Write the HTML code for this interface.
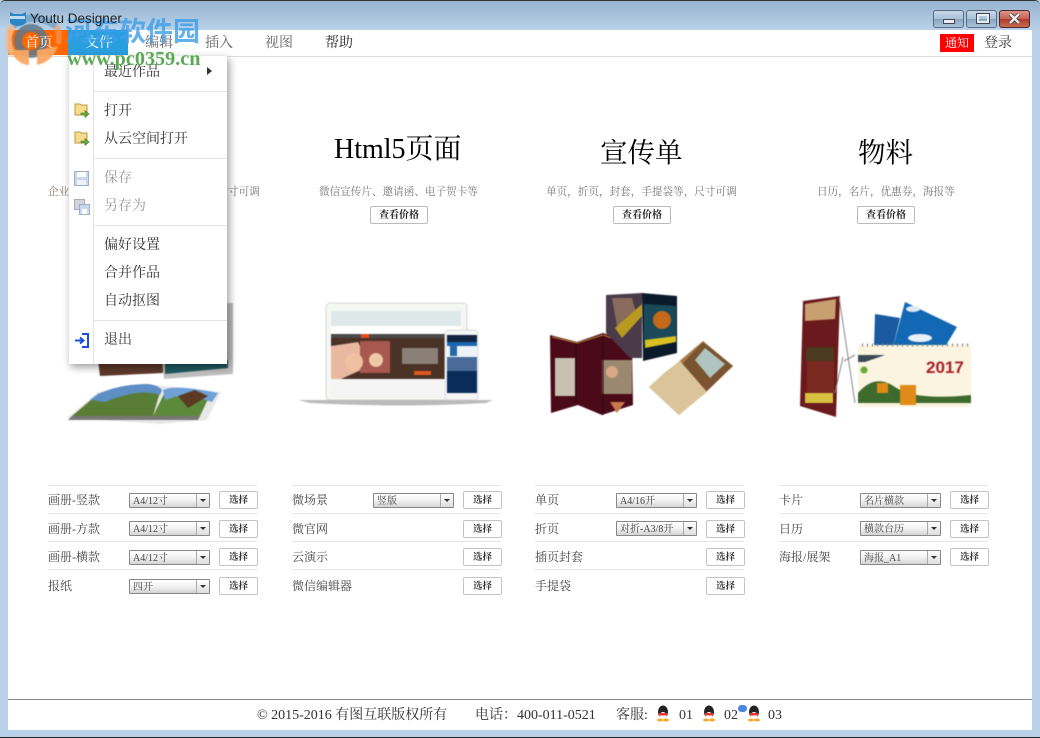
<!DOCTYPE html>
<html><head><meta charset="utf-8">
<style>
html,body{margin:0;padding:0;width:1040px;height:738px;overflow:hidden;background:#b9d2ea}
body{position:relative;font-family:"Liberation Serif","Noto Serif CJK SC",serif;color:#333}
.a{position:absolute;white-space:nowrap}
.p{filter:blur(.5px)}
#top{left:0;top:0;width:1040px;height:30px;background:linear-gradient(#98b3d0,#b9d2ea);border-top:1px solid #333;box-sizing:border-box;border-radius:5px 5px 0 0}
#main{left:8px;top:30px;width:1024px;height:700px;background:#fff}
.nav{font-size:14px;line-height:20px;top:34px;color:#666}
.sub{font-size:10.6px;color:#777;line-height:14px;top:186px}
.big{color:#000;line-height:40px}
.pr{width:56px;height:16px;border:1px solid #bbb;border-radius:2px;font-size:10px;line-height:18px;text-align:center;top:206px;color:#222;font-weight:bold;background:#fff}
.hr{height:1px;background:#e6e6e6;width:209px}
.lb{font-size:12px;line-height:16px;color:#444}
.sel{height:13px;border:1px solid #888;border-radius:1px;background:linear-gradient(#fff,#f2f2f2 50%,#d4d4d4);font-size:10px;line-height:15px;padding-left:3px;color:#444;width:76px}
.sel:after{content:"";position:absolute;right:0;top:0;width:12px;height:13px;border-left:1px solid #aaa;background:linear-gradient(#fff,#ddd)}
.sel:before{content:"";position:absolute;right:3px;top:5px;border:3px solid transparent;border-top:3px solid #333;border-bottom:0;z-index:1}
.btn{width:37px;height:16px;border:1px solid #c4c4c4;border-radius:2px;font-size:9.5px;line-height:19px;text-align:center;color:#333;background:#fff;font-weight:bold}
#menu{left:69px;top:56px;width:158px;height:308px;background:#fff;box-shadow:2px 3px 8px rgba(0,0,0,.4);z-index:5}
.mi{left:35px;font-size:14px;line-height:18px;color:#333}
.ms{left:25px;width:133px;height:1px;background:#e2e2e2}
.ft{top:708px;font-size:14px;line-height:16px;color:#333}
</style></head><body>
<div class="a" id="top"></div>
<div class="a" id="main"></div>
<div class="a" style="left:8px;top:730px;width:1024px;height:7px;background:#b9d2ea"></div>
<div class="a" style="left:0;top:737px;width:1040px;height:1px;background:#222"></div>
<div class="a" style="left:8px;top:699px;width:1024px;height:1px;background:#888"></div>

<div class="a" style="left:933px;top:10px;width:29px;height:16px;border:1px solid #5a6b80;border-radius:3px;background:linear-gradient(#c6d8ea,#a8c0d8 50%,#88a4c0 51%,#a8c4dc)"></div>
<div class="a" style="left:943px;top:19px;width:10px;height:3px;background:#e8eef4;border:1px solid #445"></div>
<div class="a" style="left:966px;top:10px;width:29px;height:16px;border:1px solid #5a6b80;border-radius:3px;background:linear-gradient(#c6d8ea,#a8c0d8 50%,#88a4c0 51%,#a8c4dc)"></div>
<div class="a" style="left:977px;top:14px;width:8px;height:5px;border:2px solid #e8eef4;outline:1px solid #445"></div>
<div class="a" style="left:999px;top:10px;width:29px;height:16px;border:1px solid #4a2a30;border-radius:3px;background:linear-gradient(#dc9488,#c86050 50%,#b03c2c 51%,#c86a50)"></div>
<svg class="a" style="left:1008px;top:13px" width="13" height="11"><path d="M2 1L11 10M11 1L2 10" stroke="#4a3a40" stroke-width="4"/><path d="M2 1L11 10M11 1L2 10" stroke="#eee" stroke-width="2.4"/></svg>

<!-- Nav -->
<div class="a" style="left:8px;top:30px;width:60px;height:25px;background:#ff6600"></div>
<div class="a" style="left:68px;top:30px;width:60px;height:25px;background:#2a9fe0"></div>
<div class="a" style="left:8px;top:56px;width:1024px;height:1px;background:#ddd"></div>

<!-- Watermark -->
<svg class="a p" style="left:6px;top:14px;z-index:3" width="58" height="54">
<path d="M7 40A23 23 0 0 1 7 12" fill="none" stroke="#f5b98a" stroke-width="7" opacity=".9"/>
<path d="M7 12Q26 -4 50 12" fill="none" stroke="#6f9cc4" stroke-width="7" opacity=".75"/>
<path d="M50 12A23 23 0 0 1 52 30" fill="none" stroke="#f59a5a" stroke-width="6" opacity=".6"/>
<circle cx="25" cy="27" r="13" fill="none" stroke="#5f7688" stroke-width="8" opacity=".85"/>
<path d="M6 40Q14 51 23 51V36H8ZM31 36V51Q46 48 52 32L44 34Z" fill="#f9a862" opacity=".95"/>
</svg>
<div class="a nav" style="left:25px;color:#fff;z-index:4">首页</div>
<div class="a nav" style="left:85px;color:#fff">文件</div>
<div class="a nav" style="left:145px">编辑</div>
<div class="a nav" style="left:205px">插入</div>
<div class="a nav" style="left:265px">视图</div>
<div class="a nav" style="left:325px;color:#222">帮助</div>
<div class="a" style="left:940px;top:34px;width:34px;height:18px;background:#f00;color:#fff;font-size:12px;line-height:19px;text-align:center">通知</div>
<div class="a" style="left:984px;top:34px;font-size:14px;line-height:20px">登录</div>
<svg class="a" style="left:9px;top:11px;z-index:9" width="18" height="16"><path d="M1 1L5 3H13L17 1V12Q9 18 1 12Z" fill="#2e86c6"/><rect x="1" y="5" width="15" height="3" fill="#fff" opacity=".7"/></svg>
<div class="a" style="left:30px;top:10px;font:13.5px/18px 'Liberation Sans',sans-serif;color:#222;z-index:9">Youtu Designer</div>
<div class="a" style="left:65px;top:15px;z-index:8;font:bold 27px/34px 'Liberation Sans','Noto Sans CJK SC',sans-serif;color:#3d9ee8;opacity:.8">河东软件园</div>
<div class="a" style="left:67px;top:48px;z-index:8;font:bold 20.2px/22px 'Liberation Serif',serif;color:#5aaa55">www.pc0359.cn</div>

<!-- Column heads -->
<div class="a sub" style="left:48px;color:#8a7a6a">企业</div>
<div class="a sub" style="left:228px">寸可调</div>
<div class="a big" style="left:334px;top:130px;font-size:28px">Html5页面</div>
<div class="a sub" style="left:319px">微信宣传片、邀请函、电子贺卡等</div>
<div class="a pr" style="left:370px">查看价格</div>
<div class="a big" style="left:600px;top:133px;font-size:27.5px">宣传单</div>
<div class="a sub" style="left:546px">单页，折页，封套，手提袋等，尺寸可调</div>
<div class="a pr" style="left:613px">查看价格</div>
<div class="a big" style="left:858px;top:133px;font-size:27.5px">物料</div>
<div class="a sub" style="left:817px">日历，名片，优惠券，海报等</div>
<div class="a pr" style="left:857px">查看价格</div>

<!-- Album picture -->
<svg class="a p" style="left:60px;top:300px" width="180" height="130">
<rect x="167" y="3" width="6" height="60" fill="#bbb"/>
<path d="M38 60H103V73L40 76Z" fill="#5e3a2a"/>
<path d="M102 60H173V74L104 79Z" fill="#c0c0c0"/><path d="M105 60H168V68L105 74Z" fill="#1f5a60"/>
<path d="M7 118L38 92 95 85 161 92 147 120 100 124Z" fill="#e8e8e8"/>
<path d="M12 116L38 94Q60 90 88 86Q98 85 100 92L93 116Z" fill="#5a7d36"/>
<path d="M38 94Q60 84 88 84Q98 85 102 90L100 95Q78 88 45 102L30 100Z" fill="#5d8ec4"/>
<path d="M93 116L105 92 150 95 140 116Z" fill="#5c8a3a"/>
<path d="M103 90Q115 84 158 93L152 102 125 94 105 100Z" fill="#6fa0d8"/>
<path d="M118 96L135 90 148 96 128 108Z" fill="#5c3a24"/>
<path d="M12 116H93V120H8Z" fill="#777"/><path d="M93 116H140L138 120H93Z" fill="#777"/>
</svg>

<!-- Laptop -->
<svg class="a p" style="left:298px;top:300px" width="200" height="110">
<rect x="28" y="3" width="141" height="97" rx="4" fill="#f5f7f2" stroke="#d8d8d8"/>
<rect x="33" y="11" width="130" height="15" fill="#dfe8e8"/>
<rect x="33" y="26" width="130" height="8" fill="#fff"/>
<rect x="33" y="34" width="130" height="4" fill="#4a4a4a"/>
<rect x="63" y="34" width="8" height="4" fill="#e44a1a"/>
<rect x="33" y="38" width="115" height="41" fill="#4a3226"/>
<path d="M33 46L60 42 72 66 43 79H33Z" fill="#e8b8a0"/>
<rect x="62" y="41" width="30" height="32" fill="#a8584e"/>
<circle cx="56" cy="62" r="9" fill="#f0c0a0"/><circle cx="78" cy="60" r="7" fill="#f0c8a8"/>
<rect x="104" y="48" width="36" height="16" fill="#8a8078"/>
<rect x="116" y="71" width="17" height="4" fill="#e0581c"/>
<rect x="33" y="79" width="115" height="18" fill="#f5f5f5"/>
<rect x="147" y="30" width="33" height="70" rx="3" fill="#f5f5f5" stroke="#ddd"/>
<rect x="149" y="35" width="30" height="58" fill="#10233f"/>
<rect x="149" y="45" width="30" height="12" fill="#eef3f8"/><rect x="149" y="42" width="30" height="4" fill="#1a66b0"/>
<rect x="152" y="46" width="7" height="10" fill="#2468a8"/>
<rect x="149" y="57" width="30" height="14" fill="#4a6a9a"/>
<rect x="149" y="71" width="30" height="22" fill="#0a2c5a"/>
<path d="M0 100H195L188 103Q100 108 12 103Z" fill="#bbb"/>
</svg>

<!-- Flyers -->
<svg class="a p" style="left:530px;top:280px" width="220" height="150">
<path d="M20 55L47 62 73 53 102 63 103 125 72 135 48 125 21 133Z" fill="#4a0a18"/>
<rect x="25" y="78" width="20" height="38" fill="#c8c0b0"/>
<rect x="72" y="80" width="30" height="34" fill="#9a8870"/>
<circle cx="82" cy="92" r="6" fill="#d8a888"/>
<path d="M80 122H95L87 133Z" fill="#c87a4a"/>
<path d="M46 62V122M73 54V135" stroke="#2a0610" fill="none"/>
<path d="M22 57L47 63 73 55 100 64" stroke="#b8882c" fill="none"/>
<path d="M76 15L112 13V78L100 78 76 53Z" fill="#4a3a4a"/>
<path d="M82 18L102 18 108 40 88 52Z" fill="#8a6a5a"/>
<path d="M85 48L112 24V36L92 58Z" fill="#b89a20"/>
<path d="M112 13L147 16 147 73 113 81Z" fill="#0a1a2a"/>
<path d="M114 24L146 26V58L114 64Z" fill="#1a4a5a"/>
<circle cx="132" cy="40" r="9" fill="#c46a1a"/>
<path d="M115 60L146 56V62L115 68Z" fill="#d8c020"/>
<path d="M173 61L203 86 149 135 119 107Z" fill="#a87a42"/>
<path d="M152 84L173 62 203 86 172 116Z" fill="#7a5430"/>
<path d="M165 80L175 68 195 84 180 98Z" fill="#b0c4c0"/>
<path d="M134 93L150 81 177 112 149 135 119 107Z" fill="#dcc49a"/>
</svg>

<!-- Stationery -->
<svg class="a p" style="left:785px;top:285px" width="200" height="140">
<path d="M18 16L55 11 51 132 15 121Z" fill="#6a1a1c"/>
<path d="M20 19L51 14 50 34 20 36Z" fill="#c8a070"/>
<rect x="21" y="62" width="28" height="14" fill="#4a3a20"/>
<rect x="22" y="76" width="27" height="32" fill="#7a2a20"/>
<rect x="20" y="108" width="28" height="10" fill="#d8c040"/>
<path d="M54 12L70 118M58 72L50 108M59 76L70 70" stroke="#888" fill="none"/>
<path d="M90 29L115 33 108 62H89Z" fill="#1a5aa0"/>
<path d="M120 17L172 42 160 62 108 62Z" fill="#1268b4"/>
<ellipse cx="128" cy="24" rx="7" ry="3" fill="#dfeaf4"/><ellipse cx="135" cy="53" rx="12" ry="4" fill="#e8f0f8"/>
<rect x="73" y="60" width="113" height="62" fill="#faf4e0"/>
<path d="M77 60H183" stroke="#777" stroke-width="3" stroke-dasharray="1 4"/>
<text x="141" y="88" font-family="Liberation Sans" font-size="17" font-weight="bold" fill="#a81e28">2017</text>
<path d="M73 108Q90 88 110 102T186 110V118H73Z" fill="#3e6a2e"/>
<rect x="115" y="100" width="16" height="20" fill="#e08a18"/><rect x="92" y="98" width="11" height="10" fill="#e08a18"/>
<path d="M73 70H100L80 77H73Z" fill="#3a4a54"/>
<circle cx="79" cy="85" r="3.500" fill="#6aaa3a"/>
</svg>

<!-- Lists -->
<div class="a hr" style="left:48px;top:485px"></div><div class="a hr" style="left:48px;top:513px"></div><div class="a hr" style="left:48px;top:541px"></div><div class="a hr" style="left:48px;top:569px"></div>
<div class="a hr" style="left:292px;top:485px"></div><div class="a hr" style="left:292px;top:513px"></div><div class="a hr" style="left:292px;top:541px"></div><div class="a hr" style="left:292px;top:569px"></div>
<div class="a hr" style="left:535px;top:485px"></div><div class="a hr" style="left:535px;top:513px"></div><div class="a hr" style="left:535px;top:541px"></div><div class="a hr" style="left:535px;top:569px"></div>
<div class="a hr" style="left:779px;top:485px"></div><div class="a hr" style="left:779px;top:513px"></div><div class="a hr" style="left:779px;top:541px"></div>

<div class="a lb" style="left:48px;top:492px">画册-竖款</div><div class="a sel" style="left:129px;top:493px">A4/12寸</div><div class="a btn" style="left:219px;top:491px">选择</div>
<div class="a lb" style="left:48px;top:521px">画册-方款</div><div class="a sel" style="left:129px;top:521px">A4/12寸</div><div class="a btn" style="left:219px;top:520px">选择</div>
<div class="a lb" style="left:48px;top:549px">画册-横款</div><div class="a sel" style="left:129px;top:550px">A4/12寸</div><div class="a btn" style="left:219px;top:548px">选择</div>
<div class="a lb" style="left:48px;top:578px">报纸</div><div class="a sel" style="left:129px;top:579px">四开</div><div class="a btn" style="left:219px;top:577px">选择</div>

<div class="a lb" style="left:292px;top:492px">微场景</div><div class="a sel" style="left:373px;top:493px">竖版</div><div class="a btn" style="left:463px;top:491px">选择</div>
<div class="a lb" style="left:292px;top:521px">微官网</div><div class="a btn" style="left:463px;top:520px">选择</div>
<div class="a lb" style="left:292px;top:549px">云演示</div><div class="a btn" style="left:463px;top:548px">选择</div>
<div class="a lb" style="left:292px;top:578px">微信编辑器</div><div class="a btn" style="left:463px;top:577px">选择</div>

<div class="a lb" style="left:535px;top:492px">单页</div><div class="a sel" style="left:616px;top:493px">A4/16开</div><div class="a btn" style="left:706px;top:491px">选择</div>
<div class="a lb" style="left:535px;top:521px">折页</div><div class="a sel" style="left:616px;top:521px">对折-A3/8开</div><div class="a btn" style="left:706px;top:520px">选择</div>
<div class="a lb" style="left:535px;top:549px">插页封套</div><div class="a btn" style="left:706px;top:548px">选择</div>
<div class="a lb" style="left:535px;top:578px">手提袋</div><div class="a btn" style="left:706px;top:577px">选择</div>

<div class="a lb" style="left:779px;top:492px">卡片</div><div class="a sel" style="left:860px;top:493px">名片横款</div><div class="a btn" style="left:950px;top:491px">选择</div>
<div class="a lb" style="left:779px;top:521px">日历</div><div class="a sel" style="left:860px;top:521px">横款台历</div><div class="a btn" style="left:950px;top:520px">选择</div>
<div class="a lb" style="left:779px;top:549px">海报/展架</div><div class="a sel" style="left:860px;top:550px">海报_A1</div><div class="a btn" style="left:950px;top:548px">选择</div>

<!-- Menu -->
<div class="a" id="menu">
<div class="a" style="left:24px;top:0;width:1px;height:308px;background:#e2e2e2"></div>
<div class="a mi" style="top:8px">最近作品</div>
<div class="a" style="left:138px;top:11px;border-left:5px solid #333;border-top:4px solid transparent;border-bottom:4px solid transparent"></div>
<div class="a ms" style="top:35px"></div>
<div class="a mi" style="top:47px">打开</div>
<div class="a mi" style="top:75px">从云空间打开</div>
<div class="a ms" style="top:102px"></div>
<div class="a mi" style="top:114px;color:#999">保存</div>
<div class="a mi" style="top:142px;color:#999">另存为</div>
<div class="a ms" style="top:169px"></div>
<div class="a mi" style="top:181px">偏好设置</div>
<div class="a mi" style="top:209px">合并作品</div>
<div class="a mi" style="top:237px">自动抠图</div>
<div class="a ms" style="top:264px"></div>
<div class="a mi" style="top:276px">退出</div>
<svg class="a" style="left:5px;top:47px" width="16" height="16"><path d="M1 1H6L7 2H13V12H1Z" fill="#f6dc8c" stroke="#b89a40"/><path d="M7 10H11V7.500L15 11 11 14.500V12H7Z" fill="#6aa83a" stroke="#3d7a20" stroke-width=".6"/></svg>
<svg class="a" style="left:5px;top:75px" width="16" height="16"><path d="M1 1H6L7 2H13V12H1Z" fill="#f6dc8c" stroke="#b89a40"/><path d="M7 10H11V7.500L15 11 11 14.500V12H7Z" fill="#6aa83a" stroke="#3d7a20" stroke-width=".6"/></svg>
<svg class="a" style="left:5px;top:115px" width="16" height="16"><rect x=".5" y=".5" width="14" height="14" fill="#c8d8ee" stroke="#9ab0cc"/><rect x="3" y="1" width="9" height="5" fill="#fff"/><rect x="3" y="9" width="9" height="5" fill="#eef2f2"/></svg>
<svg class="a" style="left:5px;top:143px" width="16" height="16"><rect x=".5" y=".5" width="10" height="10" fill="#d0d4d8" stroke="#aab"/><rect x="5.500" y="5.500" width="10" height="10" fill="#c8d8ee" stroke="#9ab0cc"/><rect x="8" y="10" width="5" height="5" fill="#fff"/></svg>
<svg class="a" style="left:5px;top:276px" width="17" height="17"><path d="M8 2H14V15H8" fill="none" stroke="#1a4fe0" stroke-width="2"/><path d="M1 8.500H9M6 5.500L9.500 8.500 6 11.500" fill="none" stroke="#1a4fe0" stroke-width="2"/></svg>
</div>

<!-- Footer -->
<div class="a ft" style="left:257px">© 2015-2016 有图互联版权所有</div>
<div class="a ft" style="left:475px">电话：400-011-0521</div>
<div class="a ft" style="left:616px">客服:</div>
<div class="a ft" style="left:679px">01</div>
<div class="a ft" style="left:724px">02</div>
<div class="a ft" style="left:768px">03</div>
<svg class="a" style="left:655px;top:705px" width="16" height="17"><ellipse cx="8" cy="7" rx="5" ry="6.500" fill="#222"/><ellipse cx="8" cy="11" rx="3.500" ry="4" fill="#fff"/><rect x="4" y="8" width="8" height="2.500" fill="#e33"/><ellipse cx="5" cy="15" rx="3" ry="1.500" fill="#f5a623"/><ellipse cx="11" cy="15" rx="3" ry="1.500" fill="#f5a623"/></svg>
<svg class="a" style="left:701px;top:705px" width="16" height="17"><ellipse cx="8" cy="7" rx="5" ry="6.500" fill="#222"/><ellipse cx="8" cy="11" rx="3.500" ry="4" fill="#fff"/><rect x="4" y="8" width="8" height="2.500" fill="#e33"/><ellipse cx="5" cy="15" rx="3" ry="1.500" fill="#f5a623"/><ellipse cx="11" cy="15" rx="3" ry="1.500" fill="#f5a623"/></svg>
<svg class="a" style="left:746px;top:705px" width="16" height="17"><ellipse cx="8" cy="7" rx="5" ry="6.500" fill="#222"/><ellipse cx="8" cy="11" rx="3.500" ry="4" fill="#fff"/><rect x="4" y="8" width="8" height="2.500" fill="#e33"/><ellipse cx="5" cy="15" rx="3" ry="1.500" fill="#f5a623"/><ellipse cx="11" cy="15" rx="3" ry="1.500" fill="#f5a623"/></svg>
<div class="a" style="left:738px;top:705px;width:9px;height:7px;background:#4a86e0;border-radius:4px"></div>
</body></html>
